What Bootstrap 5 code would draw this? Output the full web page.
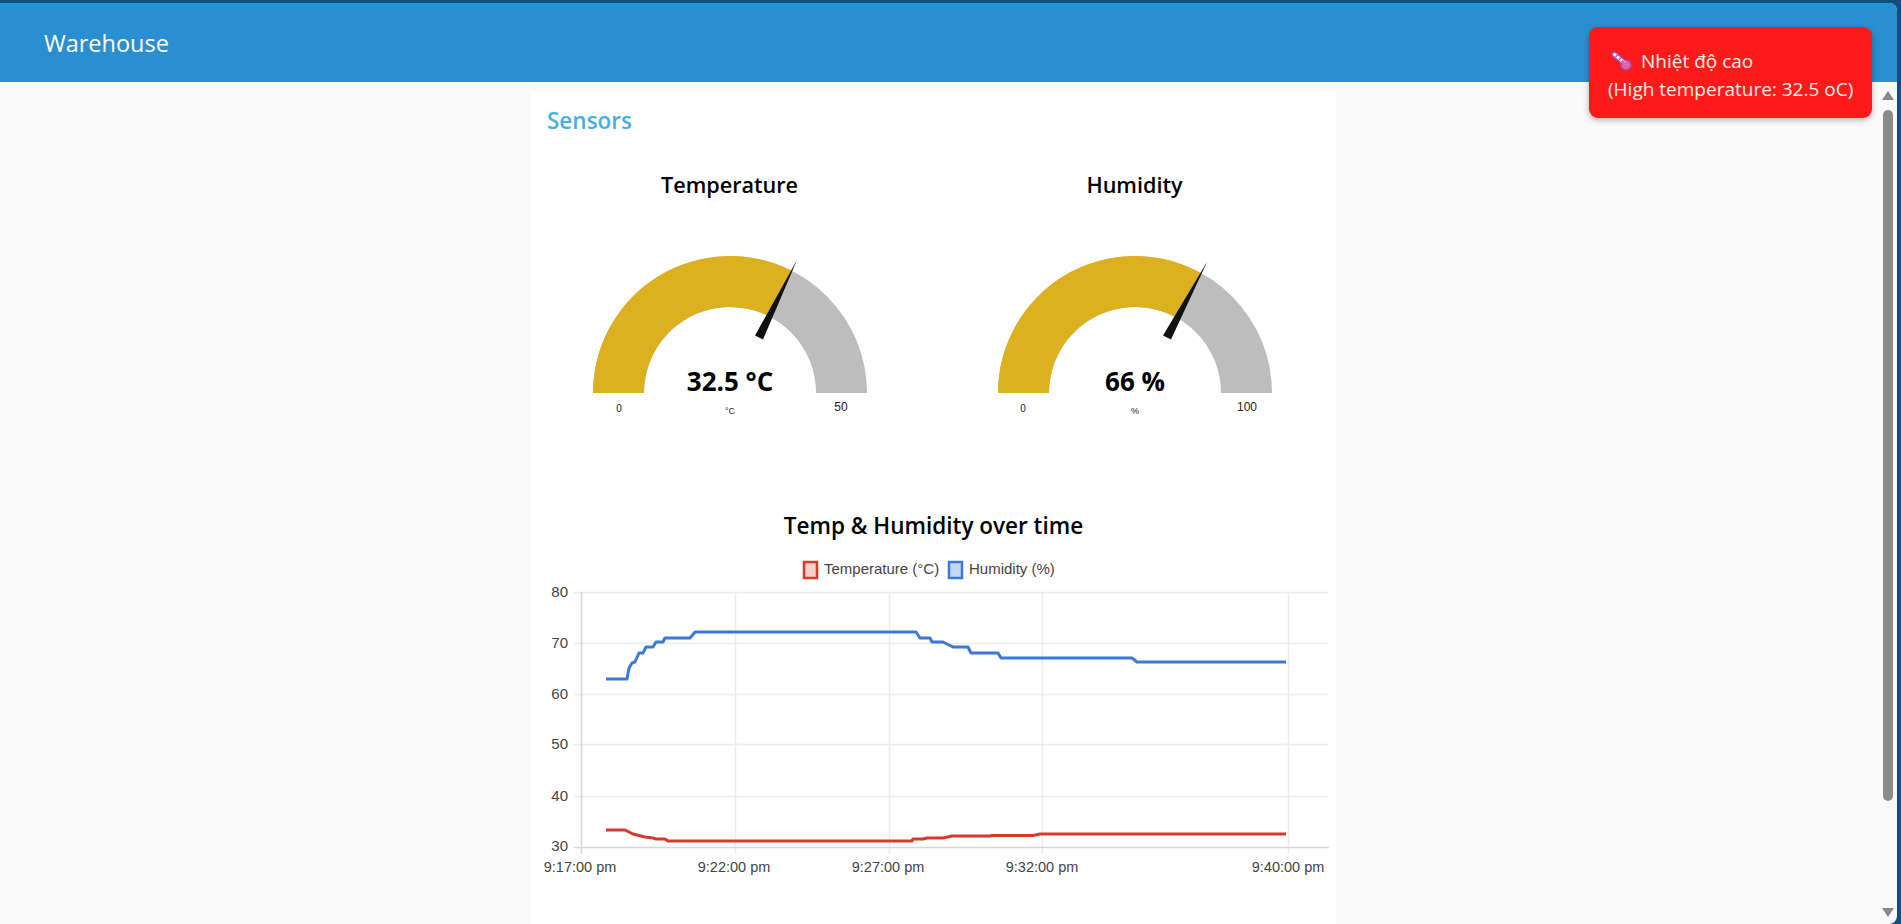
<!DOCTYPE html>
<html lang="en">

<head>
    <meta charset="UTF-8">
    <meta name="viewport" content="width=device-width, initial-scale=1.0">
    <title>Warehouse</title>
    <link rel="stylesheet" href="https://cdn.jsdelivr.net/npm/bootstrap@5.3.0/dist/css/bootstrap.min.css">
    <style>
        html,
        body {
            height: 100%;
            overflow: hidden;
        }

        body {
            background-color: #164d80;
            font-family: 'Open Sans', sans-serif;
            padding: 3px 4px 0 0;
        }

        .app-frame {
            height: 100%;
            background-color: #fafafa;
            border-radius: 0 8px 8px 0;
            overflow: hidden;
        }

        .app-header {
            height: 79px;
            background-color: #2a8fd0;
            border-top: 3px solid #1b97d3;
            padding: 0 0 0 44px;
        }

        .app-header .navbar-brand {
            color: #fff;
            font-size: 23.5px;
            line-height: 30px;
            padding: 0;
            margin-top: -3px;
        }

        .page-body {
            min-height: 0;
        }

        .page-main {
            min-width: 0;
        }

        .sensor-card {
            width: 805px;
            margin: 8px 0 0 531px;
            height: 900px;
            background: #fff;
        }

        .group-title {
            color: #45b0de;
            font-size: 22.5px;
            line-height: 30px;
            font-weight: 600;
            margin: 16px 0 0 16px;
        }

        .gauge-row {
            width: 810px;
            margin: 34px 0 0 -4px;
        }

        .gauge-cell {
            flex: 0 0 405px;
        }

        .widget-title {
            color: #000;
            font-size: 21.6px;
            line-height: 30px;
            font-weight: 600;
            text-align: center;
            margin: 0;
        }

        .chart-title {
            font-size: 22.5px;
        }

        .gauge-cell svg {
            display: block;
            margin-top: 40px;
        }

        .gauge-value {
            font-family: 'Open Sans', sans-serif;
            font-size: 26px;
            font-weight: 700;
            fill: #000;
        }

        .gauge-tick {
            font-family: 'Liberation Sans', sans-serif;
            fill: #222;
        }

        .chart-block {
            margin-top: 81px;
        }

        .chart-block svg {
            display: block;
            margin-top: 4px;
        }

        .chart-text {
            font-family: 'Liberation Sans', sans-serif;
            font-size: 15px;
            fill: #444;
        }

        .tick-time {
            font-size: 14.5px;
        }

        .scroll-rail {
            flex: 0 0 17px;
            padding: 9px 0 0 0;
        }

        .scroll-rail svg {
            display: block;
        }

        .scroll-thumb {
            width: 10px;
            height: 691px;
            margin: 9px 0 107px 3px;
            background-color: #8a8a8a;
            border-radius: 5px;
        }

        .heat-toast {
            top: 24px;
            right: 25px;
            width: 283px;
            height: 91px;
            background-color: #ff1a1a;
            border: 0;
            border-radius: 9px;
            color: #fdeee8;
            font-size: 19px;
            line-height: 28px;
            padding: 20px 0 0 19px;
            box-shadow: 0 2px 6px rgba(0, 0, 0, .3);
            white-space: nowrap;
        }

        .heat-toast svg {
            margin: -4px 9px 0 3px;
            vertical-align: middle;
        }
    </style>
</head>

<body>
    <div class="app-frame d-flex flex-column position-relative">
        <nav class="navbar app-header flex-shrink-0">
            <span class="navbar-brand">Warehouse</span>
        </nav>

        <div class="page-body d-flex flex-grow-1">
            <main class="page-main flex-grow-1 overflow-hidden">
                <div class="card sensor-card border-0 rounded-0">
                    <h5 class="group-title">Sensors</h5>

                    <div class="gauge-row d-flex">
                        <div class="gauge-cell">
                            <h6 class="widget-title">Temperature</h6>
                            <svg viewBox="527 240 405 190" width="405" height="190">
                                <path d="M593 393A137 137 0 0 1 867 393H816A86 86 0 0 0 644 393Z" fill="#bdbdbd" />
                                <path d="M593 393A137 137 0 0 1 792.2 271L769 316.4A86 86 0 0 0 644 393Z" fill="#dcb01f" />
                                <path d="M797 260L763 339.5L755 335.5Z" fill="#111" />
                                <text class="gauge-value" x="730" y="391" text-anchor="middle">32.5 °C</text>
                                <text class="gauge-tick" x="619" y="412" font-size="10" text-anchor="middle">0</text>
                                <text class="gauge-tick" x="730" y="414" font-size="9" text-anchor="middle">°C</text>
                                <text class="gauge-tick" x="841" y="411" font-size="12" text-anchor="middle">50</text>
                            </svg>
                        </div>
                        <div class="gauge-cell">
                            <h6 class="widget-title">Humidity</h6>
                            <svg viewBox="932 240 405 190" width="405" height="190">
                                <path d="M998 393A137 137 0 0 1 1272 393H1221A86 86 0 0 0 1049 393Z" fill="#bdbdbd" />
                                <path d="M998 393A137 137 0 0 1 1201 273L1176.4 317.6A86 86 0 0 0 1049 393Z" fill="#dcb01f" />
                                <path d="M1207 262L1171 339.5L1163 335.5Z" fill="#111" />
                                <text class="gauge-value" x="1135" y="391" text-anchor="middle">66 %</text>
                                <text class="gauge-tick" x="1023" y="412" font-size="10" text-anchor="middle">0</text>
                                <text class="gauge-tick" x="1135" y="414" font-size="9" text-anchor="middle">%</text>
                                <text class="gauge-tick" x="1247" y="411" font-size="12" text-anchor="middle">100</text>
                            </svg>
                        </div>
                    </div>

                    <div class="chart-block">
                        <h6 class="widget-title chart-title">Temp &amp; Humidity over time</h6>
                        <svg viewBox="531 545 805 345" width="805" height="345">
                            <!-- grid -->
                            <g stroke="#ececec" stroke-width="1.5">
                                <path d="M574 592.5H1328M574 643.5H1328M574 694.5H1328M574 744.5H1328M574 796.5H1328" />
                                <path d="M735.5 592V854M889.5 592V854M1042.5 592V854M1288.5 592V854" />
                            </g>
                            <path d="M581.5 592V854M574 847.5H1329" stroke="#d8d8d8" stroke-width="1.5" fill="none" />

                            <!-- legend -->
                            <rect x="804" y="562" width="13" height="16" fill="#f9cfcb" stroke="#d8392b" stroke-width="2.5" />
                            <text class="chart-text" x="824" y="574">Temperature (°C)</text>
                            <rect x="949" y="562" width="13" height="16" fill="#c4d9f5" stroke="#3b78d8" stroke-width="2.5" />
                            <text class="chart-text" x="969" y="574">Humidity (%)</text>

                            <!-- y axis -->
                            <g class="chart-text" text-anchor="end">
                                <text x="568" y="597">80</text>
                                <text x="568" y="648">70</text>
                                <text x="568" y="699">60</text>
                                <text x="568" y="749">50</text>
                                <text x="568" y="801">40</text>
                                <text x="568" y="851">30</text>
                            </g>

                            <!-- x axis -->
                            <g class="chart-text tick-time" text-anchor="middle">
                                <text x="580" y="872">9:17:00 pm</text>
                                <text x="734" y="872">9:22:00 pm</text>
                                <text x="888" y="872">9:27:00 pm</text>
                                <text x="1042" y="872">9:32:00 pm</text>
                                <text x="1288" y="872">9:40:00 pm</text>
                            </g>

                            <polyline fill="none" stroke="#3b78d8" stroke-width="3" stroke-linejoin="round"
                                points="606,679 627,679 629,668 632,663 635,662 639,653 643,653 646,647 653,647 656,642 663,642 665,638 690,638 695,632 916,632 920,638 930,638 932,642 943,642 953,647 968,647 971,653 998,653 1001,658 1132,658 1137,662 1286,662" />
                            <polyline fill="none" stroke="#d8392b" stroke-width="3" stroke-linejoin="round"
                                points="606,830 625,830 633,834 645,837 653,838 656,839 665,839 668,841 912,841 913,839 923,839 927,838 943,838 952,836 990,836 992,835.5 1033,835.5 1040,834 1286,834" />
                        </svg>
                    </div>
                </div>
            </main>

            <div class="scroll-rail">
                <svg width="17" height="10" viewBox="0 0 17 10">
                    <path d="M8 0L14 9H2Z" fill="#8a8a8a" />
                </svg>
                <div class="scroll-thumb"></div>
                <svg width="17" height="10" viewBox="0 0 17 10">
                    <path d="M2 0H14L8 9Z" fill="#8a8a8a" />
                </svg>
            </div>
        </div>

        <div class="toast show heat-toast position-absolute" role="alert">
            <svg width="21" height="20" viewBox="0 0 21 20">
                <path d="M3.5 3.5L13 11.5" stroke="#a04ab8" stroke-width="6" stroke-linecap="round" />
                <circle cx="15" cy="14" r="5" fill="#e8609f" stroke="#a04ab8" stroke-width="1.5" />
                <path d="M3.5 3.5L13 11.5" stroke="#f8e6f2" stroke-width="3.2" stroke-linecap="round" />
                <path d="M4.5 6L6.5 3.8M8 9L10 6.8" stroke="#a04ab8" stroke-width="1.2" />
                <path d="M10.5 9.8L14 13" stroke="#e8609f" stroke-width="3" />
            </svg>Nhiệt độ cao<br>(High temperature: 32.5 oC)
        </div>
    </div>

    <script src="https://cdn.jsdelivr.net/npm/bootstrap@5.3.0/dist/js/bootstrap.bundle.min.js"></script>
</body>

</html>
